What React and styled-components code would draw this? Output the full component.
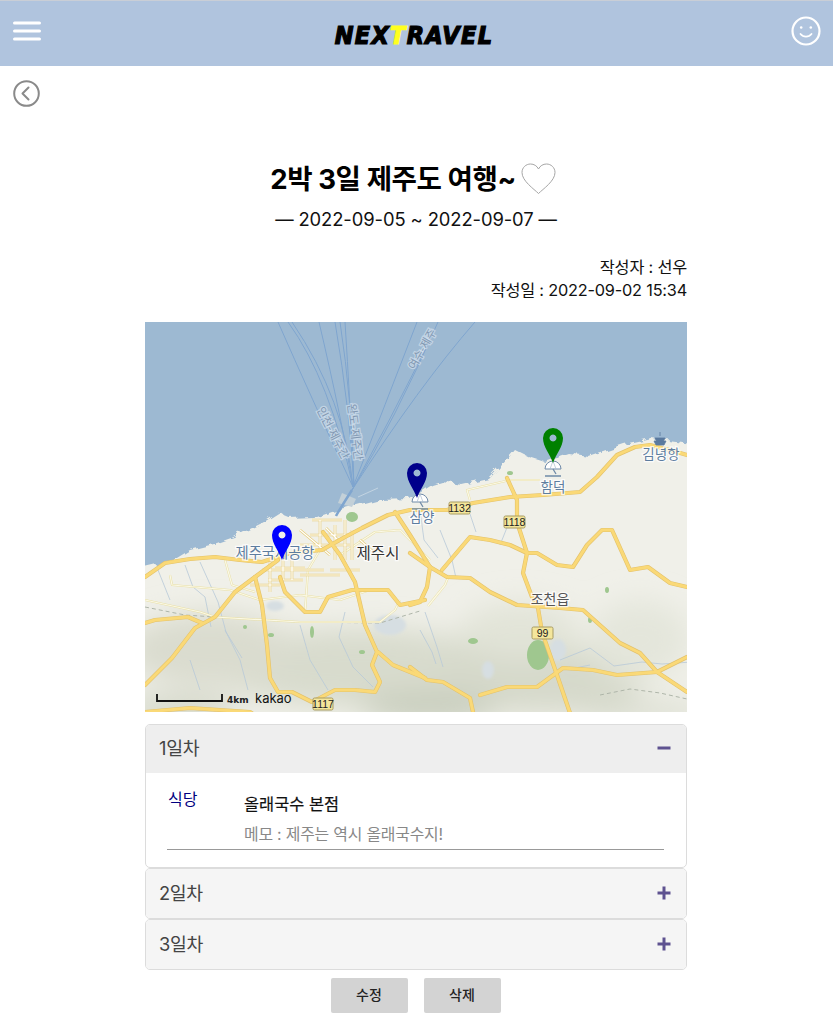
import React from "react";
import styled, { createGlobalStyle } from "styled-components";

const Global = createGlobalStyle`
  html, body { margin: 0; padding: 0; background: #fff; }
  body { font-family: Inter, "Noto Sans CJK KR", "Noto Sans", sans-serif; color: #000; }
`;
const Page = styled.div`width: 833px; height: 1027px; overflow: hidden;`;
const Header = styled.header`
  background: #b0c4de; border-top: 1px solid #c9ced6;
  display: flex; align-items: center; justify-content: space-between; padding: 0 12px 6px 13px; height: 59px;
`;
const Logo = styled.div`
  font-family: "DejaVu Sans Condensed", "DejaVu Sans", sans-serif; font-weight: 700; font-style: italic;
  font-size: 25px; line-height: 24px; letter-spacing: 1.3px; color: #000; -webkit-text-stroke: 1.2px #000; margin: 11px 0 0 -4px;
`;
const YellowT = styled.span`color: #ffff1e; -webkit-text-stroke: 1.2px #ffff1e;`;
const BackRow = styled.div`height: 54px; padding: 14px 0 0 13px; box-sizing: border-box; display: flex;`;
const Column = styled.main`width: 542px; margin-left: 145px;`;
const TitleRow = styled.div`
  display: flex; align-items: center; justify-content: center; gap: 5px; height: 34px; margin: 42px 0 0 -6px;
`;
const Title = styled.h1`font-size: 27.6px; line-height: 34px; margin: 0; font-weight: 700; letter-spacing: -0.45px; color: #000;`;
const DateLine = styled.div`text-align: center; font-size: 18.4px; line-height: 26px; margin: 10px 0 0 0; color: #111; letter-spacing: -0.1px;`;
const Meta = styled.div`text-align: right; font-size: 16.3px; line-height: 22.5px; margin-top: 24px; color: #111; letter-spacing: -0.2px;`;
const MapBox = styled.div`height: 390px; margin-top: 21px; overflow: hidden; background: #9db9d2;`;
const MapSvg = styled.svg`display: block; width: 542px; height: 390px;`;
const Accordion = styled.section`margin-top: 12px; display: flex; flex-direction: column;`;
const Item = styled.article`border: 1px solid #dcdcdc; border-radius: 5px; overflow: hidden; box-sizing: border-box; background: #fff;`;
const ItemHead = styled.div`
  height: ${p => p.$h}px; background: ${p => p.$open ? "#eeeeee" : "#f5f5f5"};
  display: flex; align-items: center; justify-content: space-between; padding: 0 15px 2px 13px; box-sizing: border-box;
  font-size: 18.3px; color: #444; letter-spacing: -0.3px;
`;
const HeadLabel = styled.span`margin-bottom: 2px;`;
const ItemBody = styled.div`height: 94px; padding: 0 22px 0 21px; box-sizing: border-box;`;
const Entry = styled.div`display: flex; height: 76px; border-bottom: 1px solid #999;`;
const Cat = styled.div`width: 77px; padding-top: 14px; font-size: 16px; line-height: 24px; color: #000080; padding-left: 1px; box-sizing: border-box;`;
const Info = styled.div`display: flex; flex-direction: column;`;
const Place = styled.div`font-size: 16.4px; line-height: 24px; margin-top: 19px; color: #111; font-weight: 400; -webkit-text-stroke: 0.2px #111;`;
const Memo = styled.div`font-size: 15.9px; line-height: 22px; margin-top: 8px; color: #888; letter-spacing: -0.2px;`;
const Buttons = styled.div`display: flex; justify-content: center; gap: 16px; margin-top: 8px; margin-left: -1px;`;
const Btn = styled.button`
  width: 77px; height: 35px; background: #d3d3d3; border: none; border-radius: 2px; font-family: inherit;
  font-size: 14px; font-weight: 500; color: #222; padding: 0 0 3px;
`;
const Ico = styled.svg`display: block; flex: none;`;

const Burger = () => (
  <Ico width="28" height="20" viewBox="0 0 28 20"><g stroke="#fff" strokeWidth="3" strokeLinecap="round"><path d="M1.5 2h25M1.5 10h25M1.5 18h25" /></g></Ico>
);
const Smile = () => (
  <Ico width="30" height="30" viewBox="0 0 30 30" fill="none" stroke="#fff">
    <circle cx="15" cy="15" r="13.5" strokeWidth="2.2" />
    <circle cx="10.2" cy="11.5" r="1.3" fill="#fff" stroke="none" /><circle cx="19.8" cy="11.5" r="1.3" fill="#fff" stroke="none" />
    <path d="M9.5 18c2.8 3.6 8.2 3.6 11 0" strokeWidth="1.8" strokeLinecap="round" />
  </Ico>
);
const Back = () => (
  <Ico width="27" height="27" viewBox="0 0 27 27" fill="none" stroke="#8a8a8a">
    <circle cx="13.5" cy="13.5" r="12.3" strokeWidth="2" />
    <path d="M15.5 7.5L9.5 13.5l6 6" strokeWidth="2" strokeLinecap="round" strokeLinejoin="round" />
  </Ico>
);
const Heart = () => (
  <Ico width="35" height="32" viewBox="0 0 35 32" fill="none" stroke="#a6a6a6" strokeWidth="1">
    <path d="M17.5 30.5C13 26 1 18 1 9.5 1 4.5 5 1 9.5 1c3.4 0 6.400 1.800 8 5 1.600-3.200 4.600-5 8-5C30 1 34 4.500 34 9.500c0 8.500-12 16.500-16.500 21z" />
  </Ico>
);
const Minus = () => <Ico width="14" height="14" viewBox="0 0 14 14"><path d="M0.500 7h13" stroke="#5e5290" strokeWidth="3" /></Ico>;
const Plus = () => <Ico width="14" height="14" viewBox="0 0 14 14"><path d="M0.500 7h13M7 .5v13" stroke="#5e5290" strokeWidth="3" /></Ico>;

const pl = pts => "M" + pts.map(p => p.join(" ")).join("L");
const majorRoads = [
  [[145,577],[165,563],[190,559],[215,557],[240,560],[262,562],[290,553],[322,550],[345,537],[362,528],[388,515],[410,510],[447,510],[473,503],[510,497],[543,495],[580,492],[597,477],[617,455],[635,447],[650,445],[670,450],[687,455]],
  [[145,685],[172,658],[195,628],[215,617],[235,592],[255,577],[278,560]],
  [[145,623],[155,620],[188,617],[202,623]],
  [[255,577],[262,605],[267,645],[270,678],[278,692],[292,692],[312,702],[335,690],[355,690],[375,692],[380,682],[372,665],[377,652],[365,625],[355,582],[340,555],[323,532]],
  [[280,577],[285,592],[305,612],[320,612],[328,597],[352,590],[388,590],[400,605],[425,600]],
  [[378,652],[393,665],[425,678]],
  [[410,553],[430,567],[447,577],[470,578],[490,592],[517,605],[560,608],[583,610],[620,643],[640,653],[657,672],[687,692]],
  [[442,570],[470,537],[490,540],[510,545],[527,553],[537,553],[557,565],[573,567],[587,545],[602,530],[612,530],[630,570],[648,567],[670,583],[687,587]],
  [[507,478],[517,500],[517,522],[527,553],[523,573],[532,597],[538,608],[542,632],[557,675],[570,713]],
  [[410,667],[427,680],[443,682],[470,698],[473,712]],
  [[480,695],[507,687],[537,687],[563,668],[593,670],[617,675],[657,672],[687,657]],
  [[430,567],[427,587],[420,602],[410,605]],
  [[145,712],[190,708],[250,712],[256,716]],
  [[395,512],[410,535],[430,567]],
];
const minorRoads = [
  [[145,600],[200,612],[215,617],[300,622],[380,622],[395,610],[400,600]],
  [[170,575],[172,585],[230,590],[260,600],[300,595],[340,600],[370,590]],
  [[470,500],[467,490],[510,480],[540,480]],
  [[428,606],[445,585],[449,575]],
  [[305,612],[308,570],[320,550]],
  [[225,560],[232,585],[255,592]],
  [[340,555],[375,532],[400,530],[430,560]],
];
const grid = "M262 570h62M270 560v32M283 555v25M292 560v20M300 575h40M310 535h40M320 520v30M335 525v35M345 520v40M300 530l30 25M300 545h50M352 530v30M360 540l20 18M268 580h35M330 570h30M312 520h30M326 528l14 14M250 585h30M275 568h30";
const rivers = [
  "M185 565l8 22 12 10 6 30","M200 562l18 40 8 30 16 26","M158 570l12 30","M300 625l10 35 18 30","M345 612l-6 25 14 30 20 20","M425 612l12 35 6 20","M440 530l12 30 4 18","M420 510l4 30 14 18","M420 630l12 22 4 12","M560 660l30-12 24 18 28-4 20 2 30-2","M590 665l-20 4","M476 532l-6-18M500 545l10-25",
  "M190 660l10 30","M225 630l15 30 8 30",
];
const ships = [
  [[278,322],[310,395],[353,487]],[[288,322],[330,380],[353,487]],[[292,322],[345,400],[353,487]],
  [[319,322],[342,420],[353,487]],[[335,322],[350,410],[354,487]],[[340,322],[352,400],[354,487]],[[345,322],[350,400],[354,487]],
  [[417,322],[385,405],[353,487]],[[438,322],[395,420],[352,490]],[[425,350],[390,420],[352,490]],[[475,322],[420,385],[352,490]],
  [[352,490],[338,512],[336,516]],
];
const softBlobs = [
  { cx: 360, cy: 668, rx: 150, ry: 40, f: "#d8dbcd" }, { cx: 210, cy: 650, rx: 85, ry: 38, f: "#dadccf" },
  { cx: 540, cy: 680, rx: 105, ry: 34, f: "#d6d9cb" }, { cx: 640, cy: 640, rx: 50, ry: 40, f: "#e4e6db" },
  { cx: 520, cy: 630, rx: 60, ry: 28, f: "#e2e4d8" }, { cx: 180, cy: 710, rx: 60, ry: 14, f: "#d2d6c7" },
  { cx: 430, cy: 708, rx: 70, ry: 16, f: "#c8cdbd" }, { cx: 640, cy: 712, rx: 70, ry: 10, f: "#d8dbce" },
];
const ponds = [[390,625,16,10],[275,606,9,5],[558,650,8,11],[488,670,6,9]];
const greens = [
  [538,655,11,15],[473,641,5,3],[352,517,6,5],[245,627,2,2],[271,635,3,2],[312,632,2,6],[362,652,3,2],[607,590,2,3],[590,620,2,3],[510,473,3,2],
];
const shields = [["1132",449,502,21],["1118",504,516,21],["99",532,627,21],["1117",313,698,20]];

const Pin = ({ x, y, c }) => (
  <path transform={`translate(${x} ${y})`} d="M0 0C-3-9-10-16-10-25A10 10 0 0 1 10-25C10-16 3-9 0 0ZM0-28.500A3.500 3.500 0 1 0 0.010-28.500Z" fill={c} fillRule="evenodd" />
);
const Umbrella = ({ x, y }) => (
  <g transform={`translate(${x} ${y})`}>
    <path d="M-8 0A8 8 0 0 1 8 0Z" fill="#fff" stroke="#6f8aa8" strokeWidth="1" />
    <path d="M-3 0L0-8L3 0" stroke="#a8bacd" strokeWidth=".7" fill="none" />
    <path d="M0 0l3 5M-8 7h16" stroke="#6f8aa8" strokeWidth="1.300" fill="none" />
  </g>
);
const MapLabel = styled.text`
  font-family: "Noto Sans CJK KR", sans-serif; font-size: ${p => p.$s || 13}px; paint-order: stroke;
  stroke: ${p => p.$h || "rgba(255,255,255,.8)"}; stroke-width: 2.500px; fill: ${p => p.$c || "#5d7d9f"}; text-anchor: middle;
`;
const ShieldText = styled.text`font-family: "Liberation Sans", sans-serif; font-size: 10.500px; fill: #222; text-anchor: middle;`;
const KakaoText = styled.text`font-family: Inter, sans-serif; font-size: 13px; fill: #111;`;
const ScaleText = styled.text`font-family: "DejaVu Sans", sans-serif; font-size: 9px; font-weight: 700; fill: #222;`;

const seaHalo = "rgba(225,235,245,.55)";

const RoadMap = () => (
  <MapSvg viewBox="145 322 542 390">
    <defs>
      <filter id="b10" x="-30%" y="-30%" width="160%" height="160%"><feGaussianBlur stdDeviation="14" /></filter>
      <filter id="b1"><feGaussianBlur stdDeviation=".45" /></filter>
      <filter id="b2"><feGaussianBlur stdDeviation="1.500" /></filter>
      <filter id="rough"><feTurbulence baseFrequency=".07" numOctaves="2" seed="4" /><feDisplacementMap in="SourceGraphic" scale="7" /></filter>
    </defs>
    <rect x="145" y="322" width="542" height="390" fill="#9db9d2" />
    <path filter="url(#rough)" fill="#f0f0e9" d="M140 568L165 562 188 548 212 542 232 535 262 520 278 510 288 517 312 516 330 510 352 505 378 498 408 497 430 483 440 480 460 483 487 477 500 463 513 448 527 455 543 460 567 452 587 455 623 443 650 437 690 442V716H140Z" />
    <g filter="url(#b10)">{softBlobs.map((b, i) => <ellipse key={i} cx={b.cx} cy={b.cy} rx={b.rx} ry={b.ry} fill={b.f} />)}</g>
    <g filter="url(#b2)">{ponds.map(([x, y, a, c], i) => <ellipse key={i} cx={x} cy={y} rx={a} ry={c} fill="#d6dee2" />)}</g>
    <g filter="url(#b1)">
      {greens.map(([x, y, a, c], i) => <ellipse key={i} cx={x} cy={y} rx={a} ry={c} fill="#9fc78f" />)}
      <path d="M352 507l-14-4 4-10 14 6z" fill="#c3d0d8" />
      <path d="M358 497l20-9" stroke="#c3d4e2" strokeWidth="1" />
      {ships.map((s, i) => <path key={i} d={`M${s[0].join(" ")}Q${s[1].join(" ")} ${s[2].join(" ")}`} fill="none" stroke="#7fa5cf" strokeWidth={i === 11 ? 2.500 : 1} />)}
      {rivers.map((d, i) => <path key={i} d={d} fill="none" stroke="#b7c9d8" strokeWidth=".8" />)}
      <path d="M145 607l40 8 30 2 85 5 80 1 40-12M600 695l30-6 30 4 27 6" fill="none" stroke="#aeb5a9" strokeWidth="1" strokeDasharray="4 3" />
      {minorRoads.map((r, i) => <path key={i} d={pl(r)} fill="none" stroke="#e8dfa8" strokeWidth="2.200" strokeLinejoin="round" />)}
      {minorRoads.map((r, i) => <path key={i} d={pl(r)} fill="none" stroke="#fbf9e6" strokeWidth="1.200" strokeLinejoin="round" />)}
      <path d={grid} fill="none" stroke="#e6cc7a" strokeWidth="2.600" />
      <path d={grid} fill="none" stroke="#fff" strokeWidth="1.200" />
      {majorRoads.map((r, i) => <path key={i} d={pl(r)} fill="none" stroke="#e3c26c" strokeWidth="4.200" strokeLinejoin="round" strokeLinecap="round" />)}
      {majorRoads.map((r, i) => <path key={i} d={pl(r)} fill="none" stroke="#fad977" strokeWidth="3" strokeLinejoin="round" strokeLinecap="round" />)}
    </g>
    {shields.map(([t, x, y, w]) => (
      <g key={t}>
        <rect x={x} y={y} width={w} height="12" rx="1.500" fill="#f4e69b" stroke="#a89c63" strokeWidth="1" />
        <ShieldText x={x + w / 2} y={y + 10}>{t}</ShieldText>
      </g>
    ))}
    <Umbrella x={420} y={502} /><Umbrella x={553} y={469} />
    <path d="M660 432v4M655 438h10l-1.500 3h-7zM654 441h12l-2 4h-8z" fill="#5a7a9f" stroke="#5a7a9f" strokeWidth=".8" />
    <MapLabel x="422" y="522" $s={13.500}>삼양</MapLabel>
    <MapLabel x="553" y="492" $s={13.500}>함덕</MapLabel>
    <MapLabel x="661" y="459" $s={13.500}>김녕항</MapLabel>
    <MapLabel x="275" y="558" $s={14.300}>제주국제공항</MapLabel>
    <MapLabel x="378" y="559" $s={15.500} $c="#333">제주시</MapLabel>
    <MapLabel x="550" y="604" $s={14} $c="#555">조천읍</MapLabel>
    <MapLabel transform="rotate(63 333 433)" x="333" y="437" $s={11.500} $c="#8198b2" $h={seaHalo}>인천-제주간</MapLabel>
    <MapLabel transform="rotate(83 355 432)" x="355" y="436" $s={11.500} $c="#8198b2" $h={seaHalo}>완도-제주간</MapLabel>
    <MapLabel transform="rotate(-60 422 349)" x="422" y="353" $s={11} $c="#8198b2" $h={seaHalo}>여수-제주</MapLabel>
    <path d="M157 694v7h65v-7" fill="none" stroke="#111" strokeWidth="1.800" />
    <ScaleText x="227" y="703">4km</ScaleText>
    <KakaoText x="255" y="703">kakao</KakaoText>
    <Pin x={282} y={560} c="#0000ff" />
    <Pin x={417} y={498} c="#00008b" />
    <Pin x={553} y={463} c="#008000" />
  </MapSvg>
);

export default function App() {
  return (
    <Page>
      <Global />
      <Header>
        <Burger />
        <Logo>NEX<YellowT>T</YellowT>RAVEL</Logo>
        <Smile />
      </Header>
      <BackRow><Back /></BackRow>
      <Column>
        <TitleRow><Title>2박 3일 제주도 여행~</Title><Heart /></TitleRow>
        <DateLine>— 2022-09-05 ~ 2022-09-07 —</DateLine>
        <Meta>작성자 : 선우<br />작성일 : 2022-09-02 15:34</Meta>
        <MapBox><RoadMap /></MapBox>
        <Accordion>
          <Item>
            <ItemHead $open $h={48}><HeadLabel>1일차</HeadLabel><Minus /></ItemHead>
            <ItemBody>
              <Entry>
                <Cat>식당</Cat>
                <Info><Place>올래국수 본점</Place><Memo>메모 : 제주는 역시 올래국수지!</Memo></Info>
              </Entry>
            </ItemBody>
          </Item>
          <Item><ItemHead $h={49}><HeadLabel>2일차</HeadLabel><Plus /></ItemHead></Item>
          <Item><ItemHead $h={49}><HeadLabel>3일차</HeadLabel><Plus /></ItemHead></Item>
        </Accordion>
        <Buttons><Btn>수정</Btn><Btn>삭제</Btn></Buttons>
      </Column>
    </Page>
  );
}
